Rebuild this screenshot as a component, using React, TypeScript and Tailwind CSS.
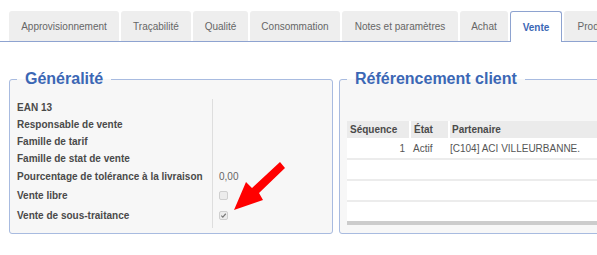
const TABS = [
  { label: "Approvisionnement", w: 110 },
  { label: "Traçabilité", w: 70 },
  { label: "Qualité", w: 55 },
  { label: "Consommation", w: 90 },
  { label: "Notes et paramètres", w: 116 },
  { label: "Achat", w: 48 },
  { label: "Vente", w: 52, active: true },
  { label: "Production", w: 75 },
];

const FIELDS: { label: string; h: string; value?: string; check?: "off" | "on" }[] = [
  { label: "EAN 13", h: "h-[17px]" },
  { label: "Responsable de vente", h: "h-[17px]" },
  { label: "Famille de tarif", h: "h-[17px]" },
  { label: "Famille de stat de vente", h: "h-[17px]" },
  { label: "Pourcentage de tolérance à la livraison", h: "h-[18px]", value: "0,00" },
  { label: "Vente libre", h: "h-[20px]", check: "off" },
  { label: "Vente de sous-traitance", h: "h-[20px]", check: "on" },
];

function Checkbox({ checked }: { checked: boolean }) {
  return (
    <span className="flex h-[9px] w-[9px] items-center justify-center rounded-[2px] border border-[#cfcfcf] bg-[#ececec]">
      {checked && (
        <svg width="7" height="7" viewBox="0 0 8 8">
          <path d="M1.5 4.2 L3.2 5.8 L6.6 2" fill="none" stroke="#777" strokeWidth="1.3" />
        </svg>
      )}
    </span>
  );
}

export default function App() {
  return (
    <div
      className="relative h-[255px] w-[597px] overflow-hidden bg-white pt-[11px]"
      style={{ fontFamily: '"Liberation Sans", Arial, sans-serif' }}
    >
      {/* Tabs */}
      <div className="flex items-end gap-[2px] border-b border-[#8ea3d0] pl-[9px]">
        {TABS.map((t) =>
          t.active ? (
            <div
              key={t.label}
              className="-mb-px flex h-[31px] shrink-0 items-center justify-center rounded-t-[3px] border border-b-0 border-[#8ea3d0] bg-white text-[10px] font-bold text-[#3b67b5]"
              style={{ width: t.w }}
            >
              {t.label}
            </div>
          ) : (
            <div
              key={t.label}
              className="flex h-[30px] shrink-0 items-center justify-center rounded-t-[3px] bg-[#eeeeee] text-[10px] text-[#666]"
              style={{ width: t.w }}
            >
              {t.label}
            </div>
          )
        )}
      </div>

      {/* Panels */}
      <div className="mt-[28px] flex gap-[6px] pl-[9px]">
        <fieldset className="h-[164px] w-[324px] shrink-0 rounded-[3px] border border-[#a8bbe0] bg-[#f7f7f7] px-[7px]">
          <legend className="px-2 text-[16px] leading-[18px] font-bold text-[#3b67b5]">Généralité</legend>
          <div className="mt-[11px] flex">
            <div className="w-[195px] shrink-0 pb-[3px]">
              {FIELDS.map((f) => (
                <div key={f.label} className={`flex items-center text-[10px] font-bold whitespace-nowrap text-[#4a4a4a] ${f.h}`}>
                  {f.label}
                </div>
              ))}
            </div>
            <div className="border-l border-[#dedede] pl-[6px] pb-[3px]">
              {FIELDS.map((f) => (
                <div key={f.label} className={`flex items-center text-[10px] text-[#666] ${f.h}`}>
                  {f.value}
                  {f.check && <Checkbox checked={f.check === "on"} />}
                </div>
              ))}
            </div>
          </div>
        </fieldset>

        <fieldset className="h-[164px] w-[300px] shrink-0 rounded-[3px] border border-[#a8bbe0] bg-[#f7f7f7] px-[7px]">
          <legend className="px-2 text-[16px] leading-[18px] font-bold text-[#3b67b5]">Référencement client</legend>
          <div className="mt-[33px] text-[10px]">
            <div className="flex h-[17px] gap-[2px] bg-white font-bold text-[#4a4a4a]">
              <div className="flex w-[62px] items-center bg-[#ebebeb] pl-[3px]">Séquence</div>
              <div className="flex w-[37px] items-center bg-[#ebebeb] pl-[3px]">État</div>
              <div className="flex flex-1 items-center bg-[#ebebeb] pl-[2px]">Partenaire</div>
            </div>
            <div className="flex h-[22px] items-center border-b-2 border-[#ececec] bg-white text-[#555]">
              <div className="w-[61px] pr-[3px] text-right">1</div>
              <div className="w-[39px] pl-[5px]">Actif</div>
              <div className="flex-1 pl-[3px]">[C104] ACI VILLEURBANNE.</div>
            </div>
            <div className="h-[21px] border-b-2 border-[#ececec] bg-white" />
            <div className="h-[21px] border-b-2 border-[#ececec] bg-white" />
            <div className="h-[19px] bg-white" />
            <div className="h-[4px] bg-[#cccccc]" />
          </div>
        </fieldset>
      </div>

      {/* Red arrow annotation */}
      <svg className="absolute top-[160px] left-[230px]" width="56" height="54" viewBox="0 0 56 54">
        <polygon points="50,2 55,8 29,33 33,40 4,50 16,22 22,28" fill="#ff0000" />
      </svg>
    </div>
  );
}
